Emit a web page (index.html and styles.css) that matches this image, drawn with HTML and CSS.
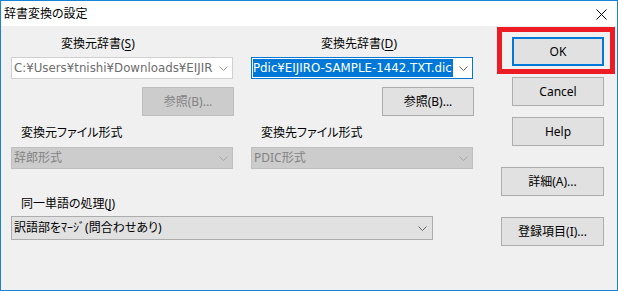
FILE: index.html
```html
<!DOCTYPE html>
<html lang="ja">
<head>
<meta charset="utf-8">
<title>辞書変換の設定</title>
<link rel="stylesheet" href="styles.css">
</head>
<body>
<div class="window">
  <div class="titlebar">
    <span class="title">辞書変換の設定</span>
    <svg class="close" width="11" height="11" viewBox="0 0 11 11"><path d="M0.5 0.5 L10.5 10.5 M10.5 0.5 L0.5 10.5" stroke="#000" stroke-width="1" fill="none"/></svg>
  </div>
  <div class="content">
    <div class="main">
      <div class="grid2">
        <div class="col">
          <div class="label label-src">変換元辞書(<u>S</u>)</div>
          <div class="combo combo-ro"><span class="ctext latin">C:¥Users¥tnishi¥Downloads¥EIJIR</span><svg class="chev" width="9" height="5" viewBox="0 0 9 5"><polyline points="0.5,0.5 4.5,4.5 8.5,0.5" fill="none" stroke="#9a9a9a"/></svg></div>
          <div class="btnrow"><div class="btn btn-disabled">参照(B)...</div></div>
          <div class="label label-fmt">変換元ファイル形式</div>
          <div class="combo combo-disabled"><span class="ctext">辞郎形式</span><svg class="chev" width="9" height="5" viewBox="0 0 9 5"><polyline points="0.5,0.5 4.5,4.5 8.5,0.5" fill="none" stroke="#a8a8a8"/></svg></div>
        </div>
        <div class="col">
          <div class="label label-dst">変換先辞書(<u>D</u>)</div>
          <div class="combo combo-focus"><span class="sel latin">Pdic¥EIJIRO-SAMPLE-1442.TXT.dic</span><span class="fill"></span><svg class="chev" width="9" height="5" viewBox="0 0 9 5"><polyline points="0.5,0.5 4.5,4.5 8.5,0.5" fill="none" stroke="#606060"/></svg></div>
          <div class="btnrow"><div class="btn">参照(B)...</div></div>
          <div class="label label-fmt">変換先ファイル形式</div>
          <div class="combo combo-disabled"><span class="ctext">PDIC形式</span><svg class="chev" width="9" height="5" viewBox="0 0 9 5"><polyline points="0.5,0.5 4.5,4.5 8.5,0.5" fill="none" stroke="#a8a8a8"/></svg></div>
        </div>
      </div>
      <div class="label label-same">同一単語の処理(<u>J</u>)</div>
      <div class="combo combo-list"><span class="ctext">訳語部をﾏｰｼﾞ(問合わせあり)</span><svg class="chev" width="9" height="5" viewBox="0 0 9 5"><polyline points="0.5,0.5 4.5,4.5 8.5,0.5" fill="none" stroke="#606060"/></svg></div>
    </div>
    <div class="side">
      <div class="btn btn-default">OK</div>
      <div class="btn">Cancel</div>
      <div class="btn">Help</div>
      <div class="btn btn-wide btn-gap">詳細(A)...</div>
      <div class="btn btn-wide btn-gap">登録項目(I)...</div>
    </div>
  </div>
  <div class="redbox"></div>
</div>
</body>
</html>
```

FILE: styles.css
```css
* { box-sizing: border-box; }
html, body { margin: 0; padding: 0; }
body {
  font-family: "Noto Sans", "Noto Sans CJK JP", sans-serif;
  font-size: 12px;
  font-feature-settings: "palt";
  color: #000;
  background: #f0f0f0;
}
.window {
  position: relative;
  width: 618px;
  height: 291px;
  border: 1px solid #1883d7;
  background: #f0f0f0;
  display: flex;
  flex-direction: column;
}
.titlebar {
  height: 25px;
  background: #fff;
  display: flex;
  align-items: center;
  padding: 0 10px 0 3px;
  flex: none;
}
.title {
  font-size: 12px;
  line-height: 16px;
  margin-top: 1px;
}
.close { margin-left: auto; margin-top: 1px; }
.content {
  flex: 1;
  display: flex;
}
.main {
  padding-left: 10px;
  width: 472px;
  flex: none;
}
.grid2 {
  display: grid;
  grid-template-columns: 222px 222px;
  column-gap: 18px;
}
.col { display: flex; flex-direction: column; }
.label {
  line-height: 16px;
  height: 16px;
  white-space: nowrap;
}
.label u { text-decoration-thickness: 1px; text-underline-offset: 2px; }
.label-src { margin-top: 10px; padding-left: 50px; }
.label-dst { margin-top: 10px; padding-left: 70px; }
.label-fmt { margin-top: 9px; padding-left: 10px; }
.label-same { margin-top: 27px; padding-left: 10px; }

.combo {
  display: flex;
  align-items: center;
  height: 22px;
  border: 1px solid #adadad;
  white-space: nowrap;
  overflow: hidden;
}
.ctext { padding-left: 2px; flex: 1; overflow: hidden; line-height: 16px; }
.latin {
  font-family: "DejaVu Sans", "Noto Sans CJK JP", sans-serif;
  font-size: 11.8px;
}
.chev { flex: none; margin-right: 4px; margin-left: 2px; }
.combo-ro {
  margin-top: 5px;
  background: #fff;
  border-color: #d0d0d0;
  color: #6d6d6d;
}
.combo-focus {
  margin-top: 5px;
  background: #fff;
  border-color: #0078d7;
}
.sel {
  flex: none;
  margin-left: 1px;
  padding-right: 1px;
  height: 18px;
  line-height: 18px;
  background: #0078d7;
  color: #fff;
  overflow: hidden;
  max-width: 202px;
}
.fill { flex: 1; }
.combo-disabled {
  margin-top: 6px;
  background: #cccccc;
  border-color: #bfbfbf;
  color: #838383;
}
.combo-list {
  margin-top: 4px;
  width: 422px;
  height: 24px;
  background: #e1e1e1;
  border-color: #adadad;
}
.combo-list .chev { margin-right: 5px; }

.btnrow {
  display: flex;
  justify-content: flex-end;
  margin-top: 8px;
  margin-right: -1px;
}
.btn {
  display: flex;
  align-items: center;
  justify-content: center;
  width: 92px;
  height: 29px;
  background: #e1e1e1;
  border: 1px solid #adadad;
  white-space: nowrap;
  line-height: 16px;
}
.btn-disabled {
  background: #cccccc;
  border-color: #bfbfbf;
  color: #838383;
}
.side {
  margin-left: auto;
  padding-right: 13px;
  padding-top: 11px;
  display: flex;
  flex-direction: column;
  align-items: flex-end;
  gap: 11px;
}
.btn-default { border: 2px solid #0078d7; }
.btn-wide { width: 103px; }
.btn-gap { margin-top: 10px; }
.redbox {
  position: absolute;
  left: 496px;
  top: 26px;
  width: 118px;
  height: 47px;
  border: 5px solid #ed1c24;
}
```
